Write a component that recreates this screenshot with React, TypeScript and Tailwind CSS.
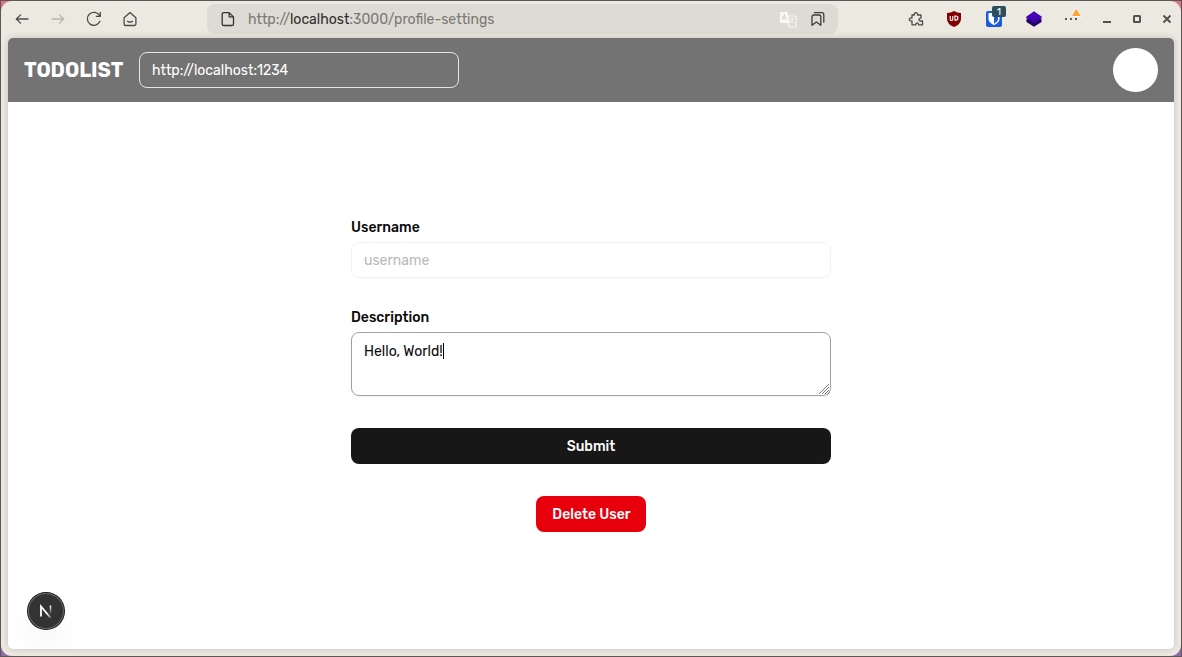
import React from "react";

const stroke = {
  fill: "none",
  stroke: "currentColor",
  strokeWidth: 1.3,
  strokeLinecap: "round" as const,
  strokeLinejoin: "round" as const,
};

function Icon({ children, className = "" }: { children: React.ReactNode; className?: string }) {
  return (
    <svg viewBox="0 0 16 16" width="16" height="16" className={"shrink-0 " + className} {...stroke}>
      {children}
    </svg>
  );
}

function BrowserBar() {
  return (
    <div className="flex h-[36px] shrink-0 items-center text-[#4c4a49]">
      <div className="flex w-[206px] items-center gap-[20px] pl-[13px]">
        <Icon>
          <path d="M14 8H2.3M6.6 3.9 2.3 8l4.3 4.1" />
        </Icon>
        <Icon className="text-[#b9b6b0]">
          <path d="M2 8h11.7M9.4 3.9 13.7 8l-4.3 4.1" />
        </Icon>
        <Icon>
          <path d="M13.9 10.3A6.5 6.5 0 1 1 13.6 4.700M14.300 1.300v4h-4" />
        </Icon>
        <Icon>
          <path d="M2.100 6.700 8 1.500l5.900 5.200v6.200a1.600 1.600 0 0 1-1.600 1.600H3.700a1.600 1.600 0 0 1-1.600-1.600zM5.600 10.200q2.400 2 4.800 0" />
        </Icon>
      </div>
      <div className="flex h-[30px] w-[631px] items-center rounded-[8px] bg-[#dedbd4] pr-[12px] pl-[13px]">
        <Icon className="text-[#343332]">
          <path d="M3.800 1.600h5.400l4.300 4.300v7a1.600 1.600 0 0 1-1.600 1.600H3.800a1.600 1.600 0 0 1-1.600-1.600V3.200a1.600 1.600 0 0 1 1.600-1.600zM9.200 1.800v4.100h4.100" />
        </Icon>
        <div className="ml-[12px] flex-1 pt-[2px] text-[14px] leading-none whitespace-nowrap text-[#7b7975]">
          http://<span className="text-[#302f2e]">localhost</span>:3000/profile-settings
        </div>
        <svg width="17" height="17" viewBox="0 0 17 17" className="mr-[13px] shrink-0">
          <path d="M6 5h9a1 1 0 0 1 1 1v9a1 1 0 0 1-1 1H9z" fill="#dedbd4" stroke="#f5f4f2" strokeWidth="1.200" />
          <path d="M1 1h6l3.200 11H1a1 1 0 0 1-1-1V2a1 1 0 0 1 1-1z" fill="#f8f8f6" />
          <path d="M2.300 8.800 4.300 4l2 4.800M3 7.300h2.600" fill="none" stroke="#d5d2cd" strokeWidth="1.100" />
          <path d="M10.500 8H14M12.200 7.500c0 2-.5 3-1.500 4m1-2 2 2.500" fill="none" stroke="#f5f4f2" />
        </svg>
        <Icon className="text-[#3c3b39]">
          <path d="M4.500 1.700h7.300a2 2 0 0 1 2 2v7.500M2 5.600A1.600 1.600 0 0 1 3.600 4h5.600a1.600 1.600 0 0 1 1.600 1.600v8.700L6.400 11 2 14.300z" />
        </Icon>
      </div>
      <div className="flex items-center pl-[70px]">
        <Icon>
          <path d="M4 4h2.300c-.8-3 4-3 3.200 0H13v3.200c-2.700-.7-2.700 3.400 0 2.700l1.500.1v3.800h-4c.5-2.700-3.200-2.700-2.700 0H4V10c-3.600.7-3.600-3.600 0-3z" />
        </Icon>
        <svg width="16" height="18" viewBox="0 0 16 18" className="ml-[22px]">
          <path d="M8 1q3 2 7 2v6q0 5-7 8-7-3-7-8V3q4 0 7-2z" fill="#800004" />
          <path d="M4.200 6v3.200a1.200 1.200 0 0 0 2.600 0V6M8.900 6v4.100h1a2 2 0 0 0 0-4.100z" fill="none" stroke="#fff" strokeWidth="1.100" />
        </svg>
        <div className="relative ml-[24px] h-[16px] w-[16px]">
          <svg width="16" height="16" viewBox="0 0 16 16">
            <rect width="16" height="16" rx="2" fill="#175ddc" />
            <path d="M2.500 2h11v6q0 3.500-5.500 6.300Q2.500 11.500 2.500 8z" fill="#fff" />
            <path d="M8 3.500h4V8q0 2.500-4 4.700z" fill="#175ddc" />
          </svg>
          <span className="absolute top-[-5px] left-[6px] flex h-[11px] w-[14px] items-center justify-center rounded-[2px] bg-[#2b4f5d] text-[10px] leading-none text-white">1</span>
        </div>
        <svg width="16" height="16" viewBox="0 0 16 16" className="ml-[24px]">
          <path d="M.5 7.500h15V11L8 15.800.5 11z" fill="#220069" />
          <path d="M8 .2 15.800 5.700v1L8 11.800.2 6.700v-1z" fill="#4500b5" />
        </svg>
        <svg width="18" height="20" viewBox="0 0 18 20" className="ml-[22px] overflow-visible">
          <path d="M1 9h2v2H1zM6 9h2v2H6zM11 9h2v2h-2z" fill="#5b5957" />
          <path d="M12.300-.5 16.300 7H8.300z" fill="#fff" stroke="#fff" strokeWidth="2" strokeLinejoin="round" />
          <path d="M12.300.3 15.900 6.500H8.700z" fill="#ffa436" stroke="#ffa436" strokeLinejoin="round" />
        </svg>
        <svg width="70" height="12" viewBox="0 0 70 12" className="ml-[20px]" fill="none" stroke="#55504f">
          <path d="M1 9h8" strokeWidth="2" />
          <rect x="32" y="3" width="6" height="6" rx=".5" strokeWidth="2" />
          <path d="m61.500 2.500 7 7m0-7-7 7" strokeWidth="1.900" />
        </svg>
      </div>
    </div>
  );
}

function AppHeader() {
  return (
    <header className="flex h-[64px] shrink-0 items-center bg-[#737373] px-[16px] text-white">
      <h1 className="w-[115px] text-[20px] leading-[28px] font-bold whitespace-nowrap">TODOLIST</h1>
      <div className="flex h-[36px] w-[320px] items-center rounded-[8px] border border-[#e5e5e5] px-[12px] text-[14px]">
        http://localhost:1234
      </div>
      <div className="ml-auto h-[44px] w-[45px] rounded-full bg-white" />
    </header>
  );
}

function ProfileForm() {
  return (
    <main className="flex flex-1 flex-col items-center pt-[118px] text-[14px] text-[#0a0a0a]">
      <div className="flex w-[480px] flex-col">
        <label className="h-[14px] leading-[16px] font-medium">Username</label>
        <div className="mt-[8px] flex h-[36px] items-center rounded-[8px] border border-[#f2f2f2] px-[12px] text-[#b9b9b9] shadow-[0_1px_2px_rgba(0,0,0,0.025)]">
          username
        </div>
        <label className="mt-[32px] h-[14px] leading-[16px] font-medium">Description</label>
        <div className="relative mt-[8px] flex h-[64px] rounded-[8px] border border-[#a1a1a1] px-[12px] pt-[9px] leading-[20px] shadow-[0_1px_2px_rgba(0,0,0,0.05)]">
          <span>Hello, World!</span>
          <span className="mt-px h-[16px] w-px bg-black" />
          <svg width="12" height="12" viewBox="0 0 12 12" className="absolute right-0 bottom-0" fill="none" stroke="#777" strokeWidth="1">
            <path d="M1 11 11 1M4 11l7-7M7 11l4-4M9.500 11.500l2-2" />
          </svg>
        </div>
        <button className="mt-[32px] h-[36px] rounded-[8px] bg-[#171717] font-medium text-[#fafafa]">Submit</button>
      </div>
      <button className="mt-[32px] h-[36px] w-[110px] rounded-[8px] bg-[#e7000b] pl-px font-medium whitespace-nowrap text-white">Delete User</button>
    </main>
  );
}

function DevBadge() {
  return (
    <div className="absolute bottom-[20px] left-[20px] flex h-[36px] w-[36px] items-center justify-center rounded-full bg-[#333] shadow-[0_0_0_1px_#171717,inset_0_0_0_1px_#686868,0_16px_32px_-8px_rgba(0,0,0,0.14)]">
      <svg width="14" height="14" viewBox="0 0 14 14" fill="none" strokeWidth="1.800">
        <defs>
          <linearGradient id="stem" x1="0" y1="0" x2="0" y2="1">
            <stop stopColor="#fff" />
            <stop offset="1" stopColor="#fff" stopOpacity="0" />
          </linearGradient>
          <linearGradient id="diagonal" x1="0" y1="0" x2="1" y2="1">
            <stop offset=".6" stopColor="#fff" />
            <stop offset="1" stopColor="#fff" stopOpacity=".25" />
          </linearGradient>
        </defs>
        <path d="M2 12.500V2.500L11.800 14" stroke="url(#diagonal)" />
        <rect x="10.700" y="1.500" width="1.600" height="9" fill="url(#stem)" />
      </svg>
    </div>
  );
}

export default function App() {
  return (
    <div className="h-[657px] w-[1182px] overflow-hidden bg-[linear-gradient(#d97883_0_50%,#8d69a8_50%)] font-['Rubik','Roboto',sans-serif]">
      <div className="h-full border border-[#5e5758]">
        <div className="flex h-full flex-col rounded-[11px] bg-[#ece9e1] px-[7px] pb-[7px]">
          <div className="-mx-[7px]">
            <BrowserBar />
          </div>
          <div className="relative mt-px flex flex-1 flex-col overflow-hidden rounded-[5px] bg-white shadow-[0_0_7px_rgba(0,0,0,0.17)]">
            <AppHeader />
            <ProfileForm />
            <DevBadge />
          </div>
        </div>
      </div>
    </div>
  );
}
